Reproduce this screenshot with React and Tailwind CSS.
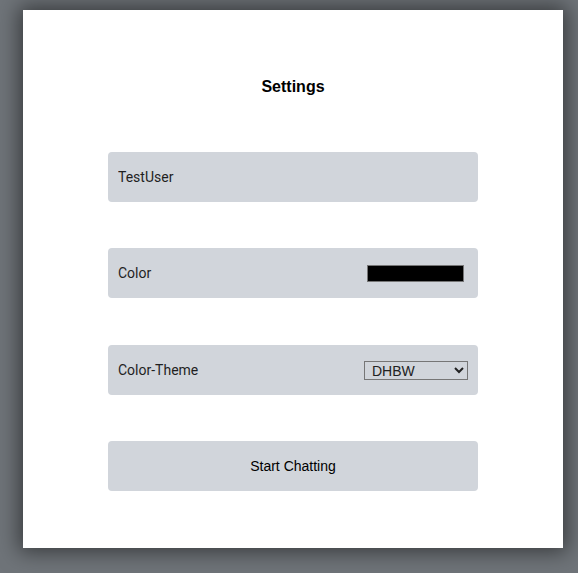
import React, { useState } from 'react';

function App() {
  const [name, setName] = useState('TestUser');
  const [theme, setTheme] = useState('DHBW');

  return (
    <div className="min-h-screen bg-[#6f7479] pl-[23px] pt-[10px]">
      <div className="w-[540px] h-[538px] bg-white shadow-[0_0_20px_4px_rgba(0,0,0,0.5)] flex flex-col items-center pt-[65px]">
        <h1 className="text-base leading-6 font-bold text-black" style={{ fontFamily: 'Arial, "Liberation Sans", sans-serif' }}>
          Settings
        </h1>

        <div className="mt-[53px] flex flex-col gap-[46px] w-[370px]" style={{ fontFamily: 'Roboto, "Segoe UI", sans-serif' }}>
          <input
            value={name}
            onChange={(e) => setName(e.target.value)}
            className="h-[50px] rounded bg-[#d1d5db] px-[10px] text-sm text-[#1f1f1f] outline-none"
          />

          <div className="h-[50px] rounded bg-[#d1d5db] px-[10px] flex items-center justify-between text-sm text-[#1f1f1f]">
            <span>Color</span>
            <div className="w-[97px] h-[17px] mr-[4px] bg-black border border-[#767676]"></div>
          </div>

          <div className="mt-[1px] h-[50px] rounded bg-[#d1d5db] px-[10px] flex items-center justify-between text-sm text-[#1f1f1f]">
            <span>Color-Theme</span>
            <select
              value={theme}
              onChange={(e) => setTheme(e.target.value)}
              className="w-[104px] h-[19px] border border-[#767676] bg-transparent text-sm leading-4 pl-[3px] text-[#222]"
              style={{ fontFamily: 'Arial, "Liberation Sans", sans-serif' }}
            >
              <option>DHBW</option>
            </select>
          </div>

          <button
            className="h-[50px] rounded bg-[#d1d5db] text-sm text-black"
            style={{ fontFamily: 'Arial, "Liberation Sans", sans-serif' }}
          >
            Start Chatting
          </button>
        </div>
      </div>
    </div>
  );
}

export default App;
